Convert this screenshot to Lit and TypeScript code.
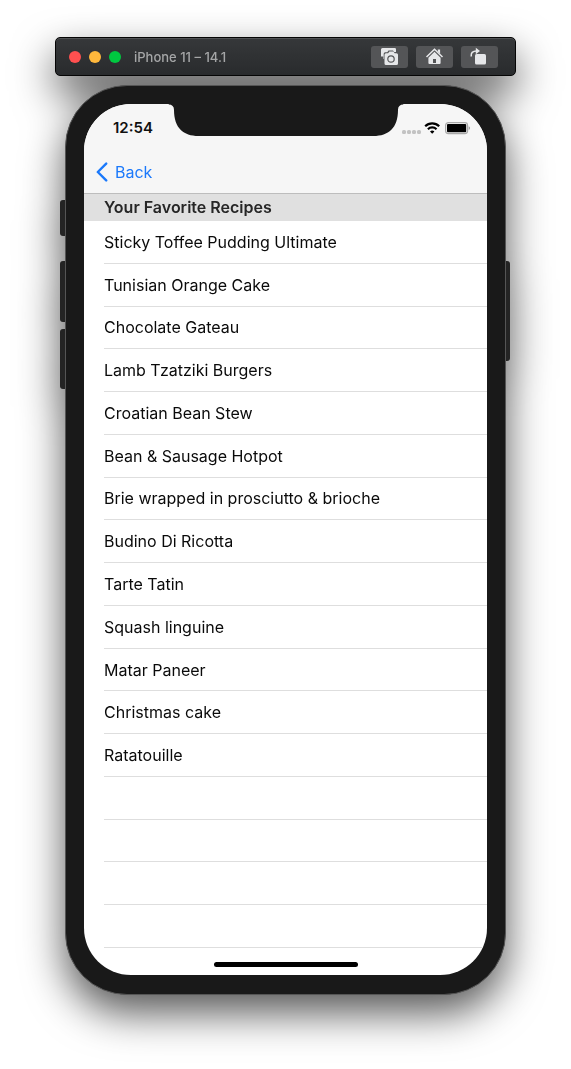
import { LitElement, html, svg, css } from "lit";
import { customElement, property, state } from "lit/decorators.js";

const RECIPES = [
  "Sticky Toffee Pudding Ultimate",
  "Tunisian Orange Cake",
  "Chocolate Gateau",
  "Lamb Tzatziki Burgers",
  "Croatian Bean Stew",
  "Bean & Sausage Hotpot",
  "Brie wrapped in prosciutto & brioche",
  "Budino Di Ricotta",
  "Tarte Tatin",
  "Squash linguine",
  "Matar Paneer",
  "Christmas cake",
  "Ratatouille",
];
const MIN_ROWS = 17;

const cameraIcon = svg`
  <path fill="#e6e7e9" d="M2.500 1h12.200q1.300 0 1.300 1.300V5h-2l-1-1.400H8.500L7.300 5.200H5.200Q3.700 5.200 3.700 6.800V12H3.200V9.500H1V2.500Q1 1 2.500 1z"/>
  <path fill="#e6e7e9" d="M6 6.200h2.100l1.300-1.700h4l1.300 1.700h1.800q1.500 0 1.500 1.500v8.800q0 1.500-1.500 1.500H6q-1.500 0-1.500-1.500V7.700q0-1.500 1.500-1.500z"/>
  <circle cx="11" cy="12" r="3.200" fill="none" stroke="#555658" stroke-width="1.200"/>`;

const homeIcon = svg`
  <path fill="none" stroke="#e6e7e9" stroke-width="1.500" stroke-linejoin="miter" d="M1.500 10 9.500 2.200 17.500 10"/>
  <path fill="#e6e7e9" d="M12.800 2.400h2.300v4.300l-2.300-2.200z"/>
  <path fill="#e6e7e9" fill-rule="evenodd" d="M9.500 4.800 15.600 10.700V16q0 1-1 1H4.400q-1 0-1-1V10.700zM8 12v4h3v-4z"/>`;

const rotateIcon = svg`
  <path fill="none" stroke="#e6e7e9" stroke-width="1.500" d="M1.400 9.500C.6 5.800 2.800 4 6.500 4"/>
  <path fill="#e6e7e9" d="M5.800.8 10 4 5.800 7.200z"/>
  <rect x="5" y="7" width="11" height="10.500" rx="1.600" fill="#e6e7e9"/>`;

@customElement("simulator-toolbar")
class SimulatorToolbar extends LitElement {
  @property() heading = "";

  static styles = css`
    :host {
      display: block;
    }
    .bar {
      box-sizing: border-box;
      display: flex;
      align-items: center;
      height: 39px;
      padding: 0 17px 0 13px;
      border: 1px solid #050505;
      border-radius: 5px;
      background: linear-gradient(#36383a, #292b2d);
      box-shadow: inset 0 1px 0 #505254;
    }
    .lights {
      display: flex;
      gap: 8px;
    }
    .light {
      width: 12px;
      height: 12px;
      padding: 0;
      border: 0;
      border-radius: 50%;
    }
    .close {
      background: #ff5050;
    }
    .minimize {
      background: #ffb83c;
    }
    .expand {
      background: #00c840;
    }
    .title {
      flex: 1;
      margin: 0 0 0 13px;
      font-size: 13px;
      font-weight: 500;
      line-height: 18px;
      color: #a5a6a7;
      white-space: nowrap;
    }
    .tools {
      display: flex;
      gap: 8px;
    }
    .tool {
      display: grid;
      place-items: center;
      width: 37px;
      height: 22px;
      padding: 0;
      border: 0;
      border-radius: 3px;
      background: #545557;
    }
    .tool svg {
      display: block;
      width: 19px;
      height: 19px;
    }
  `;

  render() {
    return html`
      <header class="bar">
        <div class="lights">
          <button class="light close" aria-label="Close"></button>
          <button class="light minimize" aria-label="Minimize"></button>
          <button class="light expand" aria-label="Expand"></button>
        </div>
        <h1 class="title">${this.heading}</h1>
        <div class="tools">
          <button class="tool" aria-label="Screenshot"><svg viewBox="0 0 19 19">${cameraIcon}</svg></button>
          <button class="tool" aria-label="Home"><svg viewBox="0 0 19 19">${homeIcon}</svg></button>
          <button class="tool" aria-label="Rotate"><svg viewBox="0 0 19 19">${rotateIcon}</svg></button>
        </div>
      </header>
    `;
  }
}

@customElement("status-bar")
class StatusBar extends LitElement {
  @property() time = "";

  static styles = css`
    :host {
      display: block;
    }
    .status {
      box-sizing: border-box;
      display: flex;
      align-items: center;
      height: 48px;
      padding: 0 17px 0 29px;
    }
    .time {
      flex: 1;
      font-size: 15px;
      font-weight: 600;
      line-height: 20px;
      color: #111;
    }
    .glyphs {
      display: block;
      width: 68px;
      height: 14px;
    }
  `;

  render() {
    return html`
      <div class="status">
        <time class="time">${this.time}</time>
        <svg class="glyphs" viewBox="0 0 68 14" aria-hidden="true">
          <g fill="#c3c3c3">
            <rect x="0" y="9" width="4" height="4" rx="1.500" />
            <rect x="5" y="9" width="4" height="4" rx="1.500" />
            <rect x="10" y="9" width="4" height="4" rx="1.500" />
            <rect x="15" y="9" width="4" height="4" rx="1.500" />
          </g>
          <g fill="none" stroke="#000" stroke-width="2.200">
            <path d="M23.200 5.200a10 10 0 0 1 14 0" />
            <path d="M25.900 8.200a6.200 6.200 0 0 1 8.600 0" />
          </g>
          <path d="M30.200 12.800 28 10.600a3.200 3.200 0 0 1 4.400 0z" />
          <rect x="43.600" y="1.600" width="22" height="11" rx="2.800" fill="none" stroke="#a8a8a8" stroke-width="1.200" />
          <rect x="45" y="3" width="19.200" height="8.200" rx="1" />
          <path d="M66.700 5.200q1.300.5 1.300 1.900t-1.300 1.900z" fill="#999" />
        </svg>
      </div>
    `;
  }
}

@customElement("recipe-list")
class RecipeList extends LitElement {
  @property({ type: Array }) recipes: string[] = [];
  @property() heading = "";

  static styles = css`
    :host {
      display: flex;
      flex-direction: column;
    }
    .heading {
      flex: none;
      margin: 0;
      padding: 0 20px;
      background: #e0e0e0;
      font-size: 16px;
      font-weight: 600;
      line-height: 27px;
      color: #262626;
    }
    .rows {
      flex: 1;
      display: flex;
      flex-direction: column;
      margin: 0;
      padding: 0 0 0 20px;
      list-style: none;
    }
    .row {
      flex: 1;
      display: flex;
      align-items: center;
      border-bottom: 1px solid #dedede;
      font-size: 16px;
      line-height: 20px;
      color: #0a0a0a;
    }
  `;

  render() {
    const blanks = Math.max(0, MIN_ROWS - this.recipes.length);
    return html`
      <h2 class="heading">${this.heading}</h2>
      <ul class="rows">
        ${this.recipes.map((name) => html`<li class="row">${name}</li>`)}
        ${Array.from({ length: blanks }, () => html`<li class="row" aria-hidden="true"></li>`)}
      </ul>
    `;
  }
}

@customElement("app-root")
class AppRoot extends LitElement {
  @state() private recipes = RECIPES;

  static styles = css`
    :host {
      display: block;
      box-sizing: border-box;
      min-height: 100vh;
      padding: 37px 55px 74px;
      background: #fff;
      font-family: Inter, "Liberation Sans", sans-serif;
      overflow: hidden;
    }
    .simulator {
      max-width: 461px;
      margin: 0 auto;
      filter: drop-shadow(0 18px 21px rgba(0, 0, 0, 0.66));
    }
    .phone {
      position: relative;
      margin: 9px 10px 0;
    }
    .key {
      position: absolute;
      left: -5px;
      width: 10px;
      border-radius: 3px;
      background: #242424;
    }
    .mute {
      top: 115px;
      height: 36px;
    }
    .volume-up {
      top: 176px;
      height: 61px;
    }
    .volume-down {
      top: 244px;
      height: 60px;
    }
    .power {
      left: auto;
      right: -4px;
      top: 176px;
      height: 100px;
    }
    .body {
      position: relative;
      padding: 18px 18px 19px;
      border: 1px solid #555;
      border-radius: 62px;
      background: #191919;
    }
    .screen {
      display: flex;
      flex-direction: column;
      aspect-ratio: 403 / 871;
      border-radius: 47px;
      background: #fff;
      overflow: hidden;
    }
    .notch {
      position: absolute;
      top: 18px;
      left: 50%;
      width: 235px;
      height: 32px;
      transform: translateX(-50%);
    }
    .chrome {
      border-bottom: 1px solid #bdbdbd;
      background: #f6f6f6;
    }
    .nav {
      display: flex;
      align-items: center;
      height: 41px;
      padding: 0 12px;
      box-sizing: border-box;
      padding-bottom: 2px;
    }
    .back {
      display: flex;
      align-items: center;
      gap: 7px;
      font-size: 16px;
      line-height: 20px;
      color: #1b79fb;
      text-decoration: none;
    }
    .chevron {
      width: 12px;
      height: 20px;
    }
    .list {
      flex: 1;
    }
    .home {
      display: flex;
      align-items: center;
      justify-content: center;
      height: 27px;
      padding-top: 6px;
      box-sizing: border-box;
    }
    .indicator {
      width: 144px;
      height: 5px;
      border-radius: 3px;
      background: #000;
    }
  `;

  render() {
    return html`
      <div class="simulator">
        <simulator-toolbar heading="iPhone 11 – 14.1"></simulator-toolbar>
        <div class="phone">
          <span class="key mute"></span>
          <span class="key volume-up"></span>
          <span class="key volume-down"></span>
          <span class="key power"></span>
          <div class="body">
            <main class="screen">
              <div class="chrome">
                <status-bar time="12:54"></status-bar>
                <nav class="nav">
                  <a class="back" href="#">
                    <svg class="chevron" viewBox="0 0 12 20" aria-hidden="true">
                      <path d="M10.200 1.600 1.800 10l8.400 8.400" fill="none" stroke="currentColor" stroke-width="2.400" stroke-linecap="round" stroke-linejoin="round" />
                    </svg>
                    Back
                  </a>
                </nav>
              </div>
              <recipe-list class="list" heading="Your Favorite Recipes" .recipes=${this.recipes}></recipe-list>
              <div class="home"><span class="indicator"></span></div>
            </main>
            <svg class="notch" viewBox="0 0 235 32" aria-hidden="true">
              <path fill="#191919" d="M0 0H235V.5Q229.500.500 229.500 6C229.500 24 220 32 205 32H30C15 32 5.500 24 5.500 6Q5.500.500 0 .500z" />
            </svg>
          </div>
        </div>
      </div>
    `;
  }
}
